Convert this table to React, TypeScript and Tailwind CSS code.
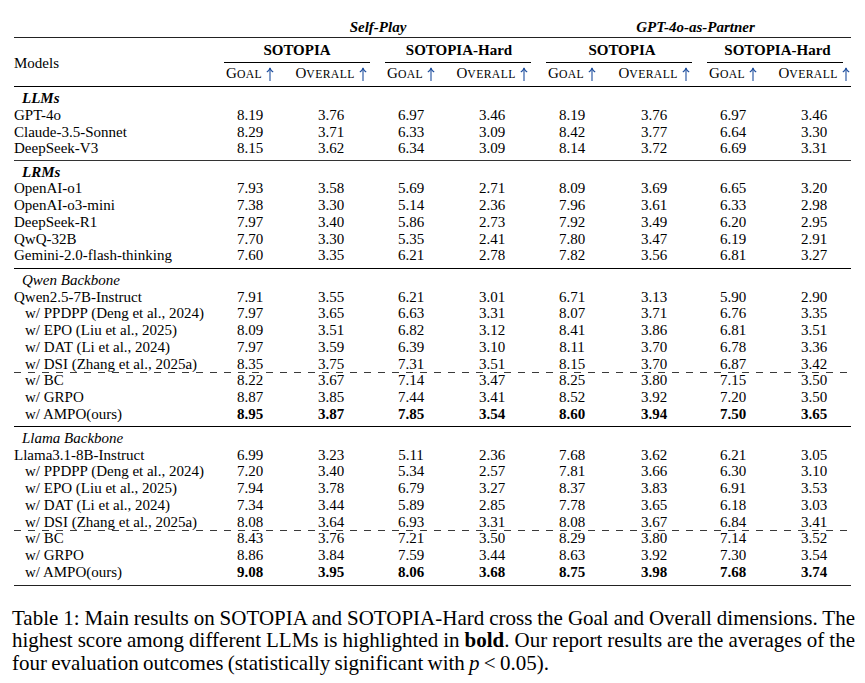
import React from "react";

const cols =
  "grid grid-cols-[202px_68px_94px_66px_96px_64px_100px_58px_89px]";

type Row = { name: string; v: string[]; sub?: boolean; bold?: boolean };

const llms: Row[] = [
  { name: "GPT-4o", v: ["8.19", "3.76", "6.97", "3.46", "8.19", "3.76", "6.97", "3.46"] },
  { name: "Claude-3.5-Sonnet", v: ["8.29", "3.71", "6.33", "3.09", "8.42", "3.77", "6.64", "3.30"] },
  { name: "DeepSeek-V3", v: ["8.15", "3.62", "6.34", "3.09", "8.14", "3.72", "6.69", "3.31"] },
];

const lrms: Row[] = [
  { name: "OpenAI-o1", v: ["7.93", "3.58", "5.69", "2.71", "8.09", "3.69", "6.65", "3.20"] },
  { name: "OpenAI-o3-mini", v: ["7.38", "3.30", "5.14", "2.36", "7.96", "3.61", "6.33", "2.98"] },
  { name: "DeepSeek-R1", v: ["7.97", "3.40", "5.86", "2.73", "7.92", "3.49", "6.20", "2.95"] },
  { name: "QwQ-32B", v: ["7.70", "3.30", "5.35", "2.41", "7.80", "3.47", "6.19", "2.91"] },
  { name: "Gemini-2.0-flash-thinking", v: ["7.60", "3.35", "6.21", "2.78", "7.82", "3.56", "6.81", "3.27"] },
];

const qwenTop: Row[] = [
  { name: "Qwen2.5-7B-Instruct", v: ["7.91", "3.55", "6.21", "3.01", "6.71", "3.13", "5.90", "2.90"] },
  { name: "w/ PPDPP (Deng et al., 2024)", sub: true, v: ["7.97", "3.65", "6.63", "3.31", "8.07", "3.71", "6.76", "3.35"] },
  { name: "w/ EPO (Liu et al., 2025)", sub: true, v: ["8.09", "3.51", "6.82", "3.12", "8.41", "3.86", "6.81", "3.51"] },
  { name: "w/ DAT (Li et al., 2024)", sub: true, v: ["7.97", "3.59", "6.39", "3.10", "8.11", "3.70", "6.78", "3.36"] },
  { name: "w/ DSI (Zhang et al., 2025a)", sub: true, v: ["8.35", "3.75", "7.31", "3.51", "8.15", "3.70", "6.87", "3.42"] },
];
const qwenBottom: Row[] = [
  { name: "w/ BC", sub: true, v: ["8.22", "3.67", "7.14", "3.47", "8.25", "3.80", "7.15", "3.50"] },
  { name: "w/ GRPO", sub: true, v: ["8.87", "3.85", "7.44", "3.41", "8.52", "3.92", "7.20", "3.50"] },
  { name: "w/ AMPO(ours)", sub: true, bold: true, v: ["8.95", "3.87", "7.85", "3.54", "8.60", "3.94", "7.50", "3.65"] },
];

const llamaTop: Row[] = [
  { name: "Llama3.1-8B-Instruct", v: ["6.99", "3.23", "5.11", "2.36", "7.68", "3.62", "6.21", "3.05"] },
  { name: "w/ PPDPP (Deng et al., 2024)", sub: true, v: ["7.20", "3.40", "5.34", "2.57", "7.81", "3.66", "6.30", "3.10"] },
  { name: "w/ EPO (Liu et al., 2025)", sub: true, v: ["7.94", "3.78", "6.79", "3.27", "8.37", "3.83", "6.91", "3.53"] },
  { name: "w/ DAT (Li et al., 2024)", sub: true, v: ["7.34", "3.44", "5.89", "2.85", "7.78", "3.65", "6.18", "3.03"] },
  { name: "w/ DSI (Zhang et al., 2025a)", sub: true, v: ["8.08", "3.64", "6.93", "3.31", "8.08", "3.67", "6.84", "3.41"] },
];
const llamaBottom: Row[] = [
  { name: "w/ BC", sub: true, v: ["8.43", "3.76", "7.21", "3.50", "8.29", "3.80", "7.14", "3.52"] },
  { name: "w/ GRPO", sub: true, v: ["8.86", "3.84", "7.59", "3.44", "8.63", "3.92", "7.30", "3.54"] },
  { name: "w/ AMPO(ours)", sub: true, bold: true, v: ["9.08", "3.95", "8.06", "3.68", "8.75", "3.98", "7.68", "3.74"] },
];

function Arrow() {
  return (
    <svg
      width="8"
      height="14"
      viewBox="0 0 8 14"
      className="inline-block align-[-3px]"
      fill="none"
      stroke="#1d4e9e"
      strokeWidth="1.1"
    >
      <path d="M4 1.2V14" />
      <path d="M0.8 5C2.5 4 3.5 3 4 0.8C4.5 3 5.5 4 7.2 5" />
    </svg>
  );
}

function SmallCap({ first, rest }: { first: string; rest: string }) {
  return (
    <span className="whitespace-nowrap">
      {first}
      <span className="text-[11.7px] tracking-[0.4px]">{rest}</span> <Arrow />
    </span>
  );
}

function DataRow({ r }: { r: Row }) {
  return (
    <div className={`${cols} h-[16.75px] leading-[16.75px]`}>
      <div className={r.sub ? "pl-[11px] whitespace-nowrap" : "whitespace-nowrap"}>
        {r.name}
      </div>
      {r.v.map((x, i) => (
        <div
          key={i}
          className={
            (i === 7 ? "pl-[15px] text-center" : "text-center") +
            (r.bold ? " font-bold" : "")
          }
        >
          {x}
        </div>
      ))}
    </div>
  );
}

function Label({ text, bold }: { text: string; bold?: boolean }) {
  return (
    <div
      className={
        bold
          ? "h-[16.75px] leading-[16.75px] pl-[8px] italic font-bold"
          : "h-[16.75px] leading-[16.75px] pl-[8px] italic"
      }
    >
      {text}
    </div>
  );
}

function Dashed() {
  return (
    <div className="relative z-10 h-px -mb-px bg-[repeating-linear-gradient(to_right,#3a3a3a_0_7px,transparent_7px_14px)]" />
  );
}

export default function App() {
  return (
    <div className="min-h-screen bg-white text-black font-[Liberation_Serif,serif]">
      <div className="pt-[19px] pl-[14px]">
        <div className="w-[837px] text-[15px]">
          {/* settings header */}
          <div className={`${cols} h-[17px] leading-[17px]`}>
            <div />
            <div className="col-span-4 text-center font-bold italic">Self-Play</div>
            <div className="col-span-4 text-center font-bold italic">GPT-4o-as-Partner</div>
          </div>
          <div className="mt-[0.5px] h-[1.5px] bg-[#222]" />

          <div className={`${cols} grid-rows-[17px_6px_17px] mt-[3.5px] leading-[17px]`}>
            <div className="row-span-3 flex items-center pt-[3px]">Models</div>
            <div className="col-span-2 text-center font-bold">SOTOPIA</div>
            <div className="col-span-2 text-center font-bold">SOTOPIA-Hard</div>
            <div className="col-span-2 text-center font-bold">SOTOPIA</div>
            <div className="col-span-2 text-center font-bold">SOTOPIA-Hard</div>

            <div className="col-span-2 pt-[3px]">
              <div className="h-px bg-black ml-[8px] mr-[8px]" />
            </div>
            <div className="col-span-2 pt-[3px]">
              <div className="h-px bg-black ml-[7px] mr-[9px]" />
            </div>
            <div className="col-span-2 pt-[3px]">
              <div className="h-px bg-black ml-[6px] mr-[12px]" />
            </div>
            <div className="col-span-2 pt-[3px]">
              <div className="h-px bg-black ml-[3px] mr-[8px]" />
            </div>

            <div className="text-center"><SmallCap first="G" rest="OAL" /></div>
            <div className="text-center"><SmallCap first="O" rest="VERALL" /></div>
            <div className="text-center"><SmallCap first="G" rest="OAL" /></div>
            <div className="text-center"><SmallCap first="O" rest="VERALL" /></div>
            <div className="text-center"><SmallCap first="G" rest="OAL" /></div>
            <div className="text-center"><SmallCap first="O" rest="VERALL" /></div>
            <div className="text-center"><SmallCap first="G" rest="OAL" /></div>
            <div className="pl-[15px] text-center"><SmallCap first="O" rest="VERALL" /></div>
          </div>
          <div className="mt-[4.5px] h-px bg-black" />

          <div className="mt-[3px]">
            <Label text="LLMs" bold />
            {llms.map((r) => (
              <DataRow key={r.name} r={r} />
            ))}
          </div>
          <div className="mt-[2.5px] h-px bg-[#333]" />

          <div className="mt-[3px]">
            <Label text="LRMs" bold />
            {lrms.map((r) => (
              <DataRow key={r.name} r={r} />
            ))}
          </div>
          <div className="mt-[3.8px] h-px bg-black" />

          <div className="mt-[3px]">
            <Label text="Qwen Backbone" />
            {qwenTop.map((r) => (
              <DataRow key={r.name} r={r} />
            ))}
            <Dashed />
            {qwenBottom.map((r) => (
              <DataRow key={r.name} r={r} />
            ))}
          </div>
          <div className="mt-[3.25px] h-px bg-black" />

          <div className="mt-[3px]">
            <Label text="Llama Backbone" />
            {llamaTop.map((r) => (
              <DataRow key={r.name} r={r} />
            ))}
            <Dashed />
            {llamaBottom.map((r) => (
              <DataRow key={r.name} r={r} />
            ))}
          </div>
          <div className="mt-[4.2px] h-[1.5px] bg-[#222]" />
        </div>

        {/* caption */}
        <p className="mt-[20.5px] -ml-[2px] w-[843px] text-[21px] leading-[22.5px] text-justify [word-spacing:-1px]">
          Table 1: Main results on SOTOPIA and SOTOPIA-Hard cross the Goal and
          Overall dimensions. The highest score among different LLMs is
          highlighted in <b>bold</b>. Our report results are the averages of
          the four evaluation outcomes (statistically significant with{" "}
          <i>p</i> &lt; 0.05).
        </p>
      </div>
    </div>
  );
}
